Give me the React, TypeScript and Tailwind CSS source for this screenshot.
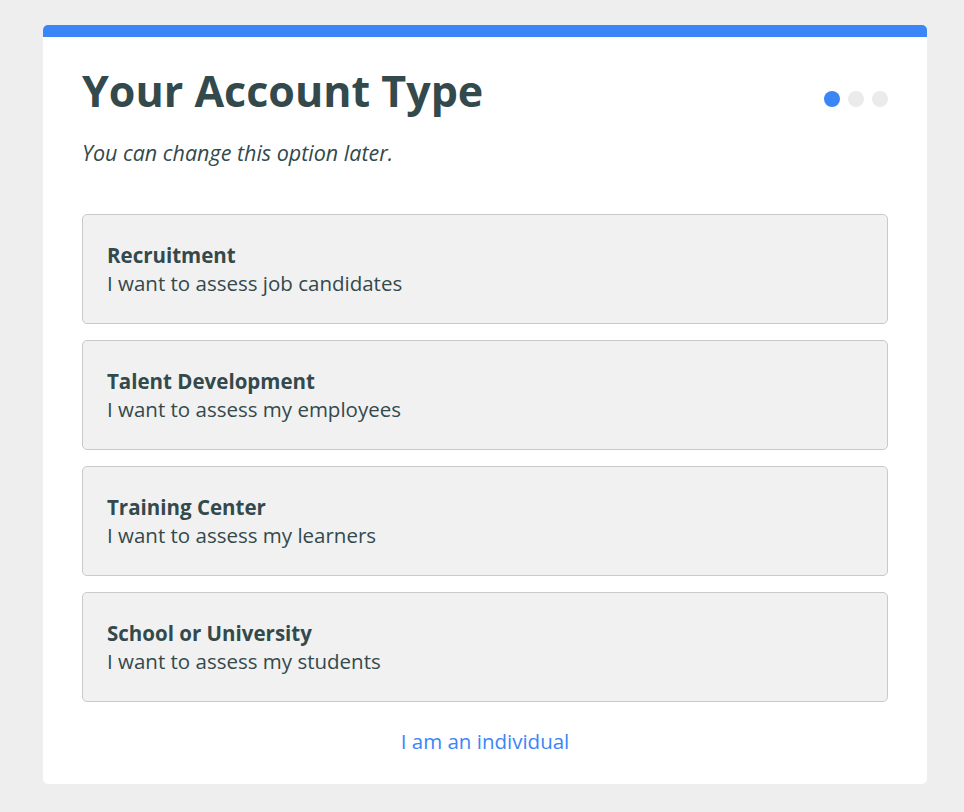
const options = [
  { title: "Recruitment", text: "I want to assess job candidates" },
  { title: "Talent Development", text: "I want to assess my employees" },
  { title: "Training Center", text: "I want to assess my learners" },
  { title: "School or University", text: "I want to assess my students" },
];

export default function App() {
  return (
    <div
      className="min-h-[812px] bg-[#eeeeee] pt-[25px] pb-[29px]"
      style={{ fontFamily: '"Open Sans", sans-serif' }}
    >
      <div className="ml-[43px] w-[884px] overflow-hidden rounded-[5px] bg-white text-[#33494b]">
        <div className="h-3 bg-[#3b86f7]" />
        <div className="px-[39px] pt-[28px] pb-[29px]">
          <div className="flex items-start justify-between">
            <h1 className="text-[43px] font-bold leading-[52px]">Your Account Type</h1>
            <div className="mt-[26px] flex gap-2">
              <span className="h-4 w-4 rounded-full bg-[#3b86f7]" />
              <span className="h-4 w-4 rounded-full bg-[#ebebeb]" />
              <span className="h-4 w-4 rounded-full bg-[#ebebeb]" />
            </div>
          </div>
          <p className="mt-[22px] text-[21.5px] italic leading-7">You can change this option later.</p>

          <div className="mt-[47px] flex flex-col gap-4">
            {options.map((o) => (
              <button
                key={o.title}
                type="button"
                className="rounded-[5px] border border-[#c9c9c9] bg-[#f1f1f1] px-6 py-[26px] text-left text-[20.5px] leading-7"
              >
                <div className="font-bold">{o.title}</div>
                <div>{o.text}</div>
              </button>
            ))}
          </div>

          <div className="mt-[25px] text-center text-[20.5px] leading-7">
            <a href="#" className="text-[#3b86f7]">I am an individual</a>
          </div>
        </div>
      </div>
    </div>
  );
}
